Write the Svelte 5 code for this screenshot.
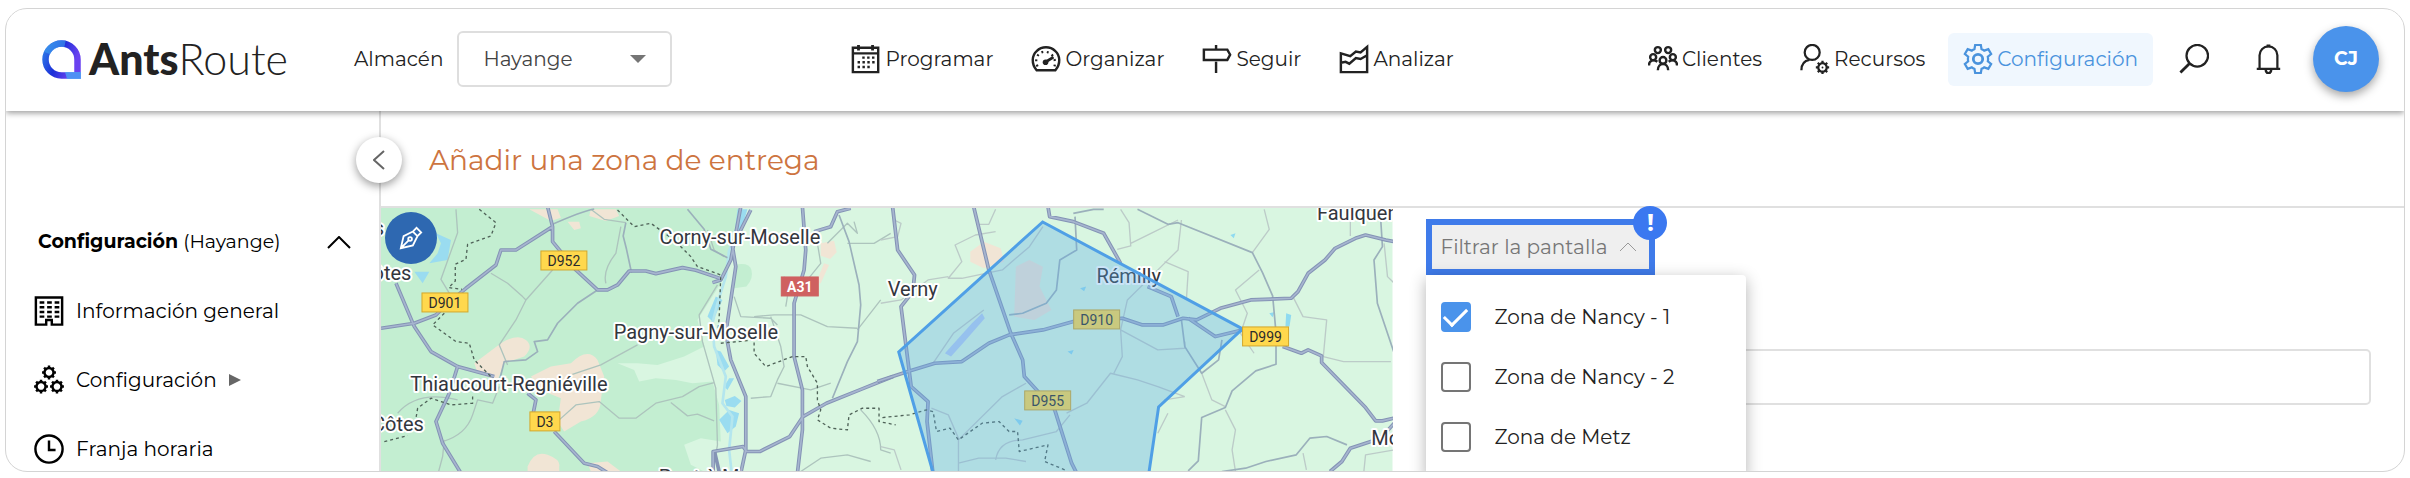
<script>
  let zones = [
    { name: "Zona de Nancy - 1", checked: true },
    { name: "Zona de Nancy - 2", checked: false },
    { name: "Zona de Metz", checked: false },
  ];

  const mainNav = [
    { icon: "calendar", label: "Programar" },
    { icon: "gauge", label: "Organizar" },
    { icon: "sign", label: "Seguir" },
    { icon: "chart", label: "Analizar" },
  ];

  const sideNav = [
    { icon: "building", label: "Información general" },
    { icon: "gears", label: "Configuración", more: true },
    { icon: "clock", label: "Franja horaria" },
  ];

  const towns = [
    { x: -2, y: 27, name: "s" },
    { x: 11, y: 72, name: "ôtes" },
    { x: 17, y: 223, name: "Côtes" },
    { x: 359, y: 36, name: "Corny-sur-Moselle" },
    { x: 315, y: 131, name: "Pagny-sur-Moselle" },
    { x: 128, y: 183, name: "Thiaucourt-Regniéville" },
    { x: 351, y: 276, name: "Pont-à-Mousson" },
    { x: 532, y: 88, name: "Verny" },
    { x: 748, y: 75, name: "Rémilly" },
    { x: 995, y: 12, name: "Faulquemont" },
    { x: 1036, y: 237, name: "Morhange" },
  ];

  const roads = [
    { x: 183, y: 53, w: 46, name: "D952" },
    { x: 64, y: 95, w: 46, name: "D901" },
    { x: 164, y: 214, w: 30, name: "D3" },
    { x: 419, y: 79, w: 37, name: "A31", motorway: true },
    { x: 716, y: 112, w: 46, name: "D910", shaded: true },
    { x: 667, y: 193, w: 46, name: "D955", shaded: true },
    { x: 885, y: 129, w: 46, name: "D999" },
  ];

  // eight teeth around a hub
  const teeth = [0, 45, 90, 135, 180, 225, 270, 315];
</script>

<svelte:head>
  <title>AntsRoute</title>
</svelte:head>

{#snippet cog(x, y, r)}
  <g transform="translate({x} {y})">
    <circle {r} />
    {#each teeth as angle}
      <path d="M0 {-r}v-2.6" transform="rotate({angle})" />
    {/each}
  </g>
{/snippet}

{#snippet icon(name)}
  <svg class="icon" viewBox="0 0 32 32" aria-hidden="true">
    {#if name == "calendar"}
      <path stroke-width="2.6" d="M2 4h27v26H2z" />
      <path d="M2 10h27" />
      <path stroke-width="3" d="M8 1v6M23 1v6" />
      <path stroke-width="2.6" stroke-dasharray="2.6 2.6" d="M12 14.500h14M7 19.500h19M7 24.500h14" />
    {:else if name == "gauge"}
      <path stroke-width="2.6" d="M6 28C0 21 1 12 6 7.500a14.500 14.500 0 0 1 20 0C31 12 32 21 26 28z" />
      <path stroke-dasharray="2 3.8" d="M7 24c-3-6-1-12 3-14.500s10-1 13 3 3 8 2 11.500" />
      <path stroke-width="3" d="m16 19 8-5" />
      <circle class="solid" cx="15.500" cy="19.500" r="3" />
    {:else if name == "sign"}
      <path stroke-width="2.6" d="M2 6h25l3 5.500-3 5.500H2zM15 1v5M15 19v12" />
    {:else if name == "chart"}
      <path stroke-width="2.6" d="M2 10v20h28V3l-7 6-5-1-6 5zM2 20l5-1 4 2 7-6 5 1 7-4" />
    {:else if name == "people"}
      <g stroke-width="2.6">
        <circle cx="10.500" cy="6.500" r="3.200" />
        <circle cx="21.500" cy="6.500" r="3.200" />
        <circle cx="5.500" cy="14" r="3.200" />
        <circle cx="26.500" cy="14" r="3.200" />
        <circle cx="16" cy="17.500" r="3.600" />
        <path d="M10.500 28c0-9 11-9 11 0M1 23c0-6 5-7 9-4M31 23c0-6-5-7-9-4" />
      </g>
    {:else if name == "user"}
      <circle cx="13" cy="9" r="8" />
      <path d="M1.500 28c0-6 3-10 8.500-11" />
      {@render cog(24, 25, 4.5)}
      <circle class="solid" cx="24" cy="25" r="1" />
    {:else if name == "settings"}
      <path
        d="M13 1h6l.8 4.500q1.500.5 2.800 1.600L27 5.500l3 5.200-3.500 2.800q.5 2.500 0 5L30 21.300l-3 5.200-4.400-1.600q-1.300 1.100-2.800 1.600L19 31h-6l-.8-4.500q-1.500-.5-2.800-1.600L5 26.500l-3-5.200 3.500-2.800q-.5-2.500 0-5L2 10.700l3-5.200 4.400 1.600q1.300-1.100 2.800-1.600z"
      />
      <circle stroke-width="3" cx="16" cy="16" r="5" />
    {:else if name == "search"}
      <circle cx="19.500" cy="12.500" r="11.500" />
      <path stroke-width="3" d="m11.500 20.500-10 10" />
    {:else if name == "bell"}
      <path d="M4 26.500h25M7 26.500V12a9.500 9.500 0 0 1 19 0v14.500" />
      <path stroke-width="4" d="M16.500.5v3" />
      <path stroke-width="2.6" d="M13.500 27c0 5.500 6 5.500 6 0" />
    {:else if name == "building"}
      <path stroke-width="2.6" d="M2 1.500h28v29H19v-5h-6v5H2z" />
      <path stroke-width="2.6" stroke-dasharray="5 3" d="M6 7h21M6 12h21M6 17h21M6 22h21" />
    {:else if name == "gears"}
      <g stroke-width="2.6">
        {@render cog(16, 8, 4.8)}
        {@render cog(7.5, 23, 4.8)}
        {@render cog(24.5, 23, 4.8)}
      </g>
    {:else if name == "clock"}
      <circle stroke-width="2.6" cx="16" cy="16" r="14.500" />
      <path stroke-width="2.6" d="M16 7v10h7" />
    {/if}
  </svg>
{/snippet}

<div class="page">
  <div class="window">
    <header>
      <div class="start">
        <a class="brand" href="#home">
          <svg viewBox="0 0 39 39" aria-hidden="true">
            <defs>
              <linearGradient id="ring" x1="0" y1="0" x2="1" y2="0.400">
                <stop offset="0" stop-color="#2f7be8" />
                <stop offset="0.500" stop-color="#1c2fd8" />
                <stop offset="1" stop-color="#6a42f0" />
              </linearGradient>
            </defs>
            <path
              fill="none"
              stroke="url(#ring)"
              stroke-width="6.500"
              d="M35.500 35.500H19.500a16 16 0 1 1 16-16z"
            />
            <path fill="#4aa4f5" d="M23 32h16v7H25z" opacity="0.8" />
            <path fill="none" stroke="#3fa0f0" stroke-width="6.500" opacity="0.6" d="M5 13a16 16 0 0 1 18-9" />
          </svg>
          <span><b>Ants</b>Route</span>
        </a>
        <label for="depot">Almacén</label>
        <div class="select">
          <select id="depot">
            <option>Hayange</option>
          </select>
          <svg viewBox="0 0 16 8" aria-hidden="true"><path d="M0 0h16L8 8z" /></svg>
        </div>
      </div>

      <nav>
        {#each mainNav as item}
          <a href="#{item.icon}">{@render icon(item.icon)}{item.label}</a>
        {/each}
      </nav>

      <nav>
        <a href="#clientes">{@render icon("people")}Clientes</a>
        <a href="#recursos">{@render icon("user")}Recursos</a>
        <a class="active" href="#configuracion">{@render icon("settings")}Configuración</a>
        <button class="tool" aria-label="Buscar">{@render icon("search")}</button>
        <button class="tool" aria-label="Notificaciones">{@render icon("bell")}</button>
        <button class="avatar">CJ</button>
      </nav>
    </header>

    <div class="body">
      <aside>
        <button class="collapse" aria-label="Plegar menú">
          <svg viewBox="0 0 12 20" aria-hidden="true"><path d="M11 1 1 10l10 9" /></svg>
        </button>
        <button class="section">
          <span><b>Configuración</b> (Hayange)</span>
          <svg viewBox="0 0 24 13" aria-hidden="true"><path d="m1 12 11-11 11 11" /></svg>
        </button>
        <ul>
          {#each sideNav as item}
            <li>
              <a href="#{item.icon}">
                {@render icon(item.icon)}
                {item.label}
                {#if item.more}
                  <svg class="more" viewBox="0 0 12 12" aria-hidden="true"><path d="M0 0l12 6-12 6z" /></svg>
                {/if}
              </a>
            </li>
          {/each}
        </ul>
      </aside>

      <main>
        <h1>Añadir una zona de entrega</h1>
        <div class="columns">
          <div class="map">
            <svg viewBox="0 0 1012 264" preserveAspectRatio="xMinYMin slice" role="img" aria-label="Mapa">
              <rect width="1012" height="264" fill="#d9f6e1" />

              <!-- west half -->
              <g transform="translate(-10 -8) scale(0.3333)" fill="none" stroke-linejoin="round">
                <path
                  fill="#c3eed1"
                  d="M0 0h1110l-30 170-30 80-70 110 20 80-60 30-80 25-60-5-60 0 50 20 15 35 50-10 60 5 50 10 60-5 20 70 5 110-60-10-50 20 20 60 60 30 25 70H0z"
                />
                <path fill="#c3eed1" d="M1090 195q45-10 52 15t-15 50l-37 5z" />
                <path
                  fill="#f1e5d5"
                  d="M390 430q50-30 75-10t-5 50l-60 20-20 50-60-20-10-30zM480 530l60-30 60-10q50-50 80-10l20 50-10 70q0 50-60 65l-50 30-20-30 10-70-50-20zM470 800q20-50 60-35t35 35v20h-95zM660 28h75l10 20-40 15-50-15zM475 28h85l10 25-30 10zM590 65l35 0 5 20-20 5zM650 790l60-5 40 30h-90zM1350 130l40-8 8 35-20 20-28-10zM1360 190l15 5-25 55-15 0z"
                />
                <path
                  fill="#9adcf0"
                  d="M195 100l45 20-10 60-55 10 25-30 10-30zM130 215l45 0-20 35zM1035 450l15 5 25 45-15 15-20-20zM1060 560l15-25 15 0-20 35zM1062 600l30-12 20 15-20 20-25-5zM1045 660l30-30 30 10-10 40-25 20zM1010 350l25-60 20 10-30 65zM1100 28h30l-15 50-10 40-15-10z"
                />
                <path
                  stroke="#b4e6ee"
                  stroke-width="8"
                  d="M1105 90l-30 60-10 80-25 80-15 60 5 70 35 90-10 80 30 40-10 100 10 90"
                />
                <path
                  stroke="#adc4bd"
                  stroke-width="4"
                  d="M255 28l5 70-50 140 30 50M360 220l50 30 45 40 10 10 80-90M465 300l-30 60-50 75 25 60M660 28l40 30 65 10M1040 255l-55 90 10 80 40 140 5 170-5 30M600 525l90-30 110-60M565 660l50-45 70-10 60 50 50 0 60-45 80-20 50-30 45-12M900 608l50 40 30-5 50 20M705 250q-10-40 30-90l15-80M215 725q70-20 90-80l15-45 45 10 20-50M220 720l-5 50-12 45M80 640q60-70 180-40M1090 290l20 60 90 5 20 20M1150 350l60-5 80 0 80 35 90 5M1240 230l10 60-5 30M1340 130l10 60-40 50M1460 390l70-90M1200 350l30 90 10 60-20 40-20 50-60 5M1220 550l100 20 60-20M1290 815l60-40 80-10 70 20M1010 90l20 60 30 20M1430 130l80 0 50-30M1370 130l60-60 30 30-10-35M1470 630q60 60 60 120l30 10"
                />
                <path
                  stroke="#9bb0bb"
                  stroke-width="5"
                  d="M540 75q90-40 130-48M765 68l-8 40 10 40 15 70M680 270l-60 40-60 60-30 50-40 5 10 30-35 25-65 5-15 60M950 28l50 60 20 60 50 25M1405 45l30 80 30 130 5 60-10 110-30 60-45 110"
                />
                <path
                  stroke="#8493b5"
                  stroke-width="11"
                  d="M530 20l15 60-110 70-45 0-15 45-90 70-60 50-30 30-65 25-100 15M545 80l0 45 70 85 65 60h30l30-15 35-42h50l30 8 80-18 40 8 75 25M75 250l55 130 50 75 80 45 110 30M260 500l-25 80-40 85 20 65 55 90M470 580l25 20-8 40M550 695l90 95 40 10 40 25M1110 20l-30 160-30 60-25 8M1140 30l-55 110 10 60-30 200 15 80 45 110 0 160-15 70M1295 20l10 130-5 60-30 100 0 160 25 100 0 120-15 130M1440 25l-40 10-20 45-50 15M1027 820v-65l90-15 10 15h40l90-45 40-60 70-40 100-40 100-40M1030 750l15 65"
                />
                <path
                  stroke="#a6b5cf"
                  stroke-width="5"
                  d="M530 20l15 60-110 70-45 0-15 45-90 70-60 50-30 30-65 25-100 15M545 80l0 45 70 85 65 60h30l30-15 35-42h50l30 8 80-18 40 8 75 25M75 250l55 130 50 75 80 45 110 30M260 500l-25 80-40 85 20 65 55 90M470 580l25 20-8 40M550 695l90 95 40 10 40 25M1110 20l-30 160-30 60-25 8M1140 30l-55 110 10 60-30 200 15 80 45 110 0 160-15 70M1295 20l10 130-5 60-30 100 0 160 25 100 0 120-15 130M1440 25l-40 10-20 45-50 15M1027 820v-65l90-15 10 15h40l90-45 40-60 70-40 100-40 100-40"
                />
                <path
                  stroke="#4f6258"
                  stroke-width="4"
                  stroke-dasharray="9 9"
                  d="M325 28l50 40-15 40-70 25-5 45-32 15 0 50-20 20 40 5M220 340l-35 35 70 50 40 5 15 50 50 50M305 590v20l-65 5-60-20-40 30-5 30M40 725l70-18M740 30l20 20 30 30 50-10 70 50 50 50 20 30 70 25-5 130-5 50M1050 430l100-10 0 40 35 40 80-30h40l5 30 30 50 0 50 10 30-10 30 40 25 50 5 5-45 40-20 50 0 0 40 50 10"
                />
              </g>

              <!-- east half -->
              <g transform="translate(500 -8) scale(0.338 0.3333)" fill="none" stroke-linejoin="round">
                <path
                  fill="#f1e5d5"
                  d="M265 155l40-30 50 20 10 40-60 20-40-20zM400 200l40-20 40 20-10 60 35 70-50 30-60-10z"
                />
                <path fill="#b3cdf2" d="M190 460l80-90 30-30 8 15-60 70-40 45z" />
                <path fill="#8fdaf0" d="M1200 340l15 5-5 35-12 0zM1150 340l15-3-5 15zM1035 105l15-5-5 15zM590 265l18-5-6 14zM553 455l18-5-6 14zM395 655l25 8-8 14z" />
                <path
                  stroke="#bccbc8"
                  stroke-width="4"
                  d="M340 28l-20 45-30 0M480 80l-40 60-80 70-120 25-40 0 40-50-20-50 60-30 60-10M0 310l60-10 80-60 60-10M155 490l60-90 90-70M710 28l25 40 5 70-40 10M1135 28l15 60-50 70M740 130l60-30 80-40M890 60l-10 90-50 50-100 100-20 90 110 60 80-5 0-20M840 185l70 30-5 80M690 520l25-50-5-80M550 640l60-30 70-90 80 20 60 20 80 30M950 520l30 80 40 20M900 590l-60 10M1020 630l30 60-10 60 10 65M1120 210l-70 60 35 70-20 60 40 60M1220 290l30 60 70 10-10 110 60 15 140 0M1490 130l10 100 20 20M230 815l0-100-30-70-50-20M230 720l130-130 70-40M230 790l60-15 80 0 60 10M340 780q10-60 80-60l100-25 40-50M1390 28v80M1430 815l5-50 85-15M0 740l40 10 20 60M0 120l50-10 10-40-20-10M820 700l30-60M1250 760l10 50"
                />
                <path
                  stroke="#9bb0bb"
                  stroke-width="5"
                  d="M570 40l60-12h30M575 50l5 100-50 30-10 90-30 40-70 30-40 5M760 28l90 45 30-5 220 90 30 60 30 70 10 110 0 95-60 20-70 60-20 50-70 30-10 130-30 30M890 360l10 80 50 80 50-40 10-60M1480 60l5 80-25 40 10 130 50 150M1010 815l70-10 60-20 90-20 40-50 50-5 60 25"
                />
                <path
                  stroke="#8493b5"
                  stroke-width="11"
                  d="M35 20l15 130 50 75-5 50-35 45 30 240 50 45-3 60 18 160M275 20l45 190 65 190 35 80 5 50 90 100 50 160 15 30M-10 545l90-30 80-25 80-5 80-55 60-25 100-15 90-25 145-10 60 20 60 0 60-20 40 5 70-35 90-25 120-5 20-20 30-55 50-40 30-35 60-30 30-10 60 15 40 8M495 20l5 30 70 15 90 35 50 90M790 260l70 30 20 60M910 355l80 55 80-20M1190 440l55 20 20-10 40 18v20l130 135 30 40h20l40-10M1520 670l-40 45-90 30-25 40-35 30"
                />
                <path
                  stroke="#a6b5cf"
                  stroke-width="5"
                  d="M35 20l15 130 50 75-5 50-35 45 30 240 50 45-3 60 18 160M275 20l45 190 65 190 35 80 5 50 90 100 50 160 15 30M-10 545l90-30 80-25 80-5 80-55 60-25 100-15 90-25 145-10 60 20 60 0 60-20 40 5 70-35 90-25 120-5 20-20 30-55 50-40 30-35 60-30 30-10 60 15 40 8M495 20l5 30 70 15 90 35 50 90M790 260l70 30 20 60M910 355l80 55 80-20M1190 440l55 20 20-10 40 18v20l130 135 30 40h20l40-10M1520 670l-40 45-90 30-25 40-35 30"
                />
                <path
                  stroke="#4f6258"
                  stroke-width="4"
                  stroke-dasharray="9 9"
                  d="M5 653l80-8 50-15 20 5 10 60 40-10 25 35 70-50 50-5 30 30h25l5 60 85-20-10 50 60 25"
                />
              </g>

              {#each towns as { x, y, name }}
                <text class="town" {x} {y}>{name}</text>
              {/each}

              {#each roads.filter((road) => road.shaded) as { x, y, w, name }}
                <rect class="shield" x={x - w / 2} y={y - 10} width={w} height="19" />
                <text class="road" {x} y={y + 5}>{name}</text>
              {/each}

              <path class="zone" d="M662 14l200 107-84 78-10 68H553l-35-123z" />

              {#each roads.filter((road) => !road.shaded) as { x, y, w, name, motorway }}
                <rect class="shield" class:motorway x={x - w / 2} y={y - 10} width={w} height="19" />
                <text class="road" class:motorway {x} y={y + 5}>{name}</text>
              {/each}
            </svg>
            <button class="draw" aria-label="Dibujar zona">
              <svg viewBox="0 0 26 26" aria-hidden="true">
                <path d="M2 24 5 11l10-5 5 5-5 10zM2 24l9-9M15 6l4-4 5 5-4 4" />
                <circle cx="12" cy="14" r="2" />
              </svg>
            </button>
          </div>

          <form>
            <div class="filter">
              <button type="button" class="toggle">
                Filtrar la pantalla
                <svg viewBox="0 0 18 10" aria-hidden="true"><path d="m1 9 8-8 8 8" /></svg>
              </button>
              <span class="badge">!</span>
              <div class="menu">
                {#each zones as zone}
                  <label><input type="checkbox" bind:checked={zone.checked} />{zone.name}</label>
                {/each}
              </div>
            </div>
            <input class="name" type="text" aria-label="Nombre de la zona" />
          </form>
        </div>
      </main>
    </div>
  </div>
</div>

<style>
  :global(body) {
    background: #fff;
  }

  .page {
    height: 100vh;
    padding: 8px 5px 6px;
    box-sizing: border-box;
    color: #222;
    font-family: Montserrat, Inter, sans-serif;
    font-size: 20px;
    line-height: 24px;
  }

  .page :global(*) {
    box-sizing: border-box;
  }

  .window {
    display: flex;
    flex-direction: column;
    height: 100%;
    border: 1px solid #d4d4d4;
    border-radius: 22px;
    overflow: hidden;
  }

  a {
    color: inherit;
    text-decoration: none;
  }

  button {
    padding: 0;
    border: 0;
    background: none;
    color: inherit;
    font: inherit;
    cursor: pointer;
  }

  svg {
    display: block;
    flex: none;
  }

  .icon {
    width: 30px;
    height: 30px;
    fill: none;
    stroke: currentColor;
    stroke-width: 2.4;
  }

  .icon .solid {
    fill: currentColor;
    stroke: none;
  }

  /* top bar */
  header {
    display: flex;
    align-items: center;
    justify-content: space-between;
    flex: none;
    height: 102px;
    padding: 0 25px 2px 36px;
    background: #fff;
    box-shadow: 0 2px 6px rgba(0, 0, 0, 0.4);
    z-index: 2;
  }

  .start,
  nav,
  nav a,
  .brand {
    display: flex;
    align-items: center;
  }

  .brand {
    gap: 8px;
    margin-right: 66px;
    font-family: Lato, sans-serif;
    font-size: 43px;
    font-weight: 300;
    line-height: 48px;
  }

  .brand b {
    font-weight: 900;
  }

  .brand svg {
    width: 39px;
    height: 39px;
  }

  .select {
    position: relative;
    margin-left: 14px;
  }

  select {
    width: 215px;
    height: 56px;
    padding: 0 24px;
    border: 2px solid #dedede;
    border-radius: 6px;
    background: #fff;
    color: #444;
    font: inherit;
    appearance: none;
  }

  .select svg {
    position: absolute;
    top: 24px;
    right: 26px;
    width: 16px;
    height: 8px;
    fill: #757575;
    pointer-events: none;
  }

  nav {
    gap: 8px;
  }

  nav a {
    gap: 4px;
    height: 53px;
    padding: 0 15px;
    border-radius: 6px;
  }

  nav .active {
    background: #f0f7fe;
    color: #4a93dd;
  }

  .tool {
    padding: 0 18px;
  }

  .avatar {
    width: 66px;
    height: 66px;
    margin-left: 4px;
    border-radius: 50%;
    background: #4a93eb;
    box-shadow: 0 4px 10px rgba(0, 0, 0, 0.35);
    color: #fff;
    font-size: 19px;
    font-weight: 700;
  }

  /* side menu */
  .body {
    display: flex;
    flex: 1;
    min-height: 0;
  }

  aside {
    position: relative;
    flex: none;
    width: 375px;
    padding: 119px 28px 0;
    border-right: 2px solid #e0e0e0;
    color: #000;
  }

  .collapse {
    position: absolute;
    top: 26px;
    right: -23px;
    display: grid;
    place-items: center;
    width: 46px;
    height: 46px;
    border-radius: 50%;
    background: #fff;
    box-shadow: 0 3px 10px rgba(0, 0, 0, 0.4);
    z-index: 1;
  }

  .collapse svg {
    width: 12px;
    height: 20px;
    fill: none;
    stroke: #666;
    stroke-width: 2;
  }

  .section {
    display: flex;
    align-items: center;
    justify-content: space-between;
    width: 100%;
    padding: 0 0 0 4px;
    font-size: 19px;
  }

  .section svg {
    width: 24px;
    height: 13px;
    fill: none;
    stroke: #000;
    stroke-width: 2;
  }

  ul {
    margin: 22px 0 0;
    padding: 0;
    list-style: none;
  }

  li a {
    display: flex;
    align-items: center;
    gap: 12px;
    height: 69px;
  }

  .more {
    width: 12px;
    height: 12px;
    fill: #666;
  }

  /* content */
  main {
    display: flex;
    flex: 1;
    flex-direction: column;
    min-width: 0;
  }

  h1 {
    flex: none;
    margin: 0;
    padding: 31px 48px 28px;
    border-bottom: 2px solid #e0e0e0;
    color: #cd7440;
    font-size: 28px;
    font-weight: 400;
    line-height: 36px;
  }

  .columns {
    display: grid;
    grid-template-columns: 1fr 1fr;
    flex: 1;
    min-height: 0;
  }

  .map {
    position: relative;
    min-height: 0;
    overflow: hidden;
  }

  .map > svg {
    width: 100%;
    height: 100%;
  }

  .town {
    fill: #33363d;
    stroke: #fff;
    stroke-width: 4px;
    stroke-linejoin: round;
    paint-order: stroke;
    font-family: Roboto, sans-serif;
    font-size: 20px;
    text-anchor: middle;
  }

  .shield {
    fill: #ffd84d;
    stroke: #d3a72c;
    stroke-width: 1px;
  }

  .shield.motorway {
    fill: #cf6060;
    stroke: #cf6060;
  }

  .road {
    fill: #2b2b2b;
    font-family: Roboto, sans-serif;
    font-size: 14px;
    text-anchor: middle;
  }

  .road.motorway {
    fill: #fff;
    font-weight: 700;
  }

  .zone {
    fill: rgba(90, 170, 230, 0.33);
    stroke: #4f9fe6;
    stroke-width: 3px;
  }

  .draw {
    position: absolute;
    top: 4px;
    left: 4px;
    display: grid;
    place-items: center;
    width: 52px;
    height: 52px;
    border-radius: 50%;
    background: #2e68b1;
  }

  .draw svg {
    width: 24px;
    height: 24px;
    fill: none;
    stroke: #fff;
    stroke-width: 2;
  }

  form {
    display: flex;
    flex-direction: column;
    align-items: flex-start;
    gap: 74px;
    padding: 11px 33px 0;
  }

  .filter {
    position: relative;
  }

  .toggle {
    display: flex;
    align-items: center;
    gap: 12px;
    height: 56px;
    padding: 0 12px 0 9px;
    border: 6px solid #3f7bea;
    background: #efefef;
    color: #777;
  }

  .toggle svg {
    width: 18px;
    height: 10px;
    fill: none;
    stroke: #999;
    stroke-width: 1;
  }

  .badge {
    position: absolute;
    top: -13px;
    right: -12px;
    width: 34px;
    height: 34px;
    border-radius: 50%;
    background: #3b78f0;
    color: #fff;
    font-size: 24px;
    font-weight: 700;
    line-height: 34px;
    text-align: center;
  }

  .menu {
    position: absolute;
    top: 56px;
    left: 0;
    display: grid;
    gap: 12px;
    width: 320px;
    padding: 18px 15px;
    border-radius: 0 4px 4px 4px;
    background: #fff;
    box-shadow: 0 4px 16px rgba(0, 0, 0, 0.3);
    z-index: 1;
  }

  .menu label {
    display: flex;
    align-items: center;
    gap: 24px;
    height: 48px;
  }

  .menu input {
    display: grid;
    place-items: center;
    width: 30px;
    height: 30px;
    margin: 0;
    border: 2px solid #757575;
    border-radius: 4px;
    appearance: none;
  }

  .menu input:checked {
    border-color: #4a93eb;
    background: #4a93eb;
  }

  .menu input:checked::before {
    content: "";
    width: 20px;
    height: 10px;
    border: solid #fff;
    border-width: 0 0 3px 3px;
    transform: translateY(-3px) rotate(-45deg);
  }

  .name {
    width: 100%;
    height: 56px;
    padding: 0 16px;
    border: 2px solid #e0e0e0;
    border-radius: 5px;
    font: inherit;
  }
</style>
